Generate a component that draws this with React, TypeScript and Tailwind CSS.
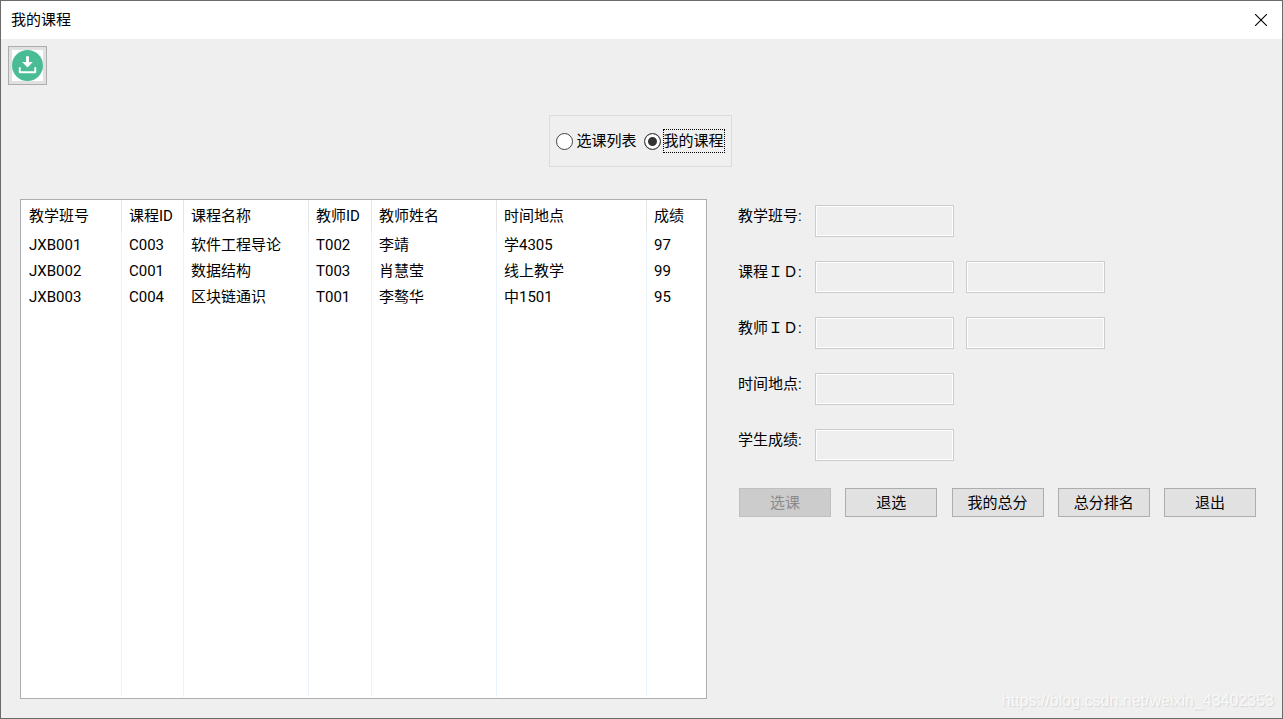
import { useState } from "react";

type Mode = "all" | "mine";

const columns = [
  { title: "教学班号", width: "w-[100px]" },
  { title: "课程ID", width: "w-[62px]" },
  { title: "课程名称", width: "w-[125px]" },
  { title: "教师ID", width: "w-[63px]" },
  { title: "教师姓名", width: "w-[125px]" },
  { title: "时间地点", width: "w-[150px]" },
  { title: "成绩", width: "" },
];

const courses = [
  ["JXB001", "C003", "软件工程导论", "T002", "李靖", "学4305", "97"],
  ["JXB002", "C001", "数据结构", "T003", "肖慧莹", "线上教学", "99"],
  ["JXB003", "C004", "区块链通识", "T001", "李骜华", "中1501", "95"],
];

const fields = [
  { id: "class-no", label: "教学班号:" },
  { id: "course-id", label: "课程ＩＤ:", extra: "课程名称" },
  { id: "teacher-id", label: "教师ＩＤ:", extra: "教师姓名" },
  { id: "place", label: "时间地点:" },
  { id: "score", label: "学生成绩:" },
];

const actions = ["选课", "退选", "我的总分", "总分排名", "退出"];

const inputClass =
  "h-8 w-[139px] border border-[#cccccc] bg-[#efefef] px-2 shadow-[inset_0_0_0_1px_#ffffff] outline-none";

function ModeOption(props: { label: string; checked: boolean; onSelect: () => void }) {
  return (
    <label className="flex items-center gap-[2px]">
      <input
        type="radio"
        name="mode"
        checked={props.checked}
        onChange={props.onSelect}
        className="size-[17px] appearance-none rounded-full border border-[#444444] bg-white outline-none checked:bg-[#333333] checked:shadow-[inset_0_0_0_3px_#ffffff]"
      />
      <span
        className={
          props.checked
            ? "border border-dotted border-black leading-[22px]"
            : "border border-transparent leading-[22px]"
        }
      >
        {props.label}
      </span>
    </label>
  );
}

function CourseTable() {
  return (
    <div className="flex flex-1 border border-[#abadb3] bg-white p-px pt-0">
      <table className="w-full table-fixed border-separate border-spacing-0 text-left">
        <thead>
          <tr className="h-8">
            {columns.map((column) => (
              <th
                key={column.title}
                className={`${column.width} border-r border-[#e5e5e5] p-0 pl-[7px] font-normal whitespace-nowrap last:border-r-0`}
              >
                {column.title}
              </th>
            ))}
          </tr>
        </thead>
        <tbody>
          {courses.map((course) => (
            <tr key={course[0]} className="h-[26px]">
              {course.map((value, i) => (
                <td
                  key={columns[i].title}
                  className="border-r border-[#eaf3fb] p-0 pl-[7px] whitespace-nowrap last:border-r-0"
                >
                  {value}
                </td>
              ))}
            </tr>
          ))}
          <tr aria-hidden="true">
            {columns.map((column) => (
              <td key={column.title} className="border-r border-[#eaf3fb] p-0 last:border-r-0" />
            ))}
          </tr>
        </tbody>
      </table>
    </div>
  );
}

export default function App() {
  const [mode, setMode] = useState<Mode>("mine");

  return (
    <div className="relative flex min-h-screen flex-col border border-[#6b6b6b] bg-[#efefef] font-[Roboto,'Noto_Sans_CJK_SC',sans-serif] text-[15px] leading-[22px] text-black">
      <header className="flex h-[38px] items-center justify-between bg-white pr-[14px] pl-[10px]">
        <h1>我的课程</h1>
        <button type="button" aria-label="关闭" className="p-px">
          <svg className="size-3" viewBox="0 0 12 12" fill="none" stroke="#000" strokeWidth="1.1">
            <path d="M0 0L12 12M12 0L0 12" />
          </svg>
        </button>
      </header>

      <main className="flex flex-1 flex-col pt-[7px] pr-[26px] pb-[19px] pl-[19px]">
        <button
          type="button"
          aria-label="导出"
          className="-ml-3 size-[39px] border border-[#adadad] bg-[#e1e1e1] p-[3px]"
        >
          <svg className="size-full bg-white" viewBox="0 0 32 32" fill="none">
            <circle cx="16" cy="16" r="16" fill="#49bb95" />
            <path d="M14.5 6.500h3V12.500h4L16 18l-5.500-5.500h4z" fill="#fff" />
            <path d="M8 18.500V23h16v-4.500" stroke="#fff" strokeWidth="2" strokeLinejoin="round" strokeLinecap="round" />
          </svg>
        </button>

        <fieldset className="mt-[30px] ml-[5px] flex gap-[6px] self-center border border-[#dcdcdc] px-[6px] py-[13px]">
          <ModeOption label="选课列表" checked={mode === "all"} onSelect={() => setMode("all")} />
          <ModeOption label="我的课程" checked={mode === "mine"} onSelect={() => setMode("mine")} />
        </fieldset>

        <div className="mt-8 flex flex-1 gap-[31px]">
          <CourseTable />

          <form className="w-[518px] pt-[6px]" onSubmit={(e) => e.preventDefault()}>
            <div className="flex flex-col gap-6">
              {fields.map((field) => (
                <div key={field.id} className="flex items-start">
                  <label htmlFor={field.id} className="w-[77px] whitespace-nowrap">
                    {field.label}
                  </label>
                  <div className="flex gap-3">
                    <input id={field.id} type="text" readOnly className={inputClass} />
                    {field.extra && (
                      <input type="text" readOnly aria-label={field.extra} className={inputClass} />
                    )}
                  </div>
                </div>
              ))}
            </div>

            <div className="mt-[27px] flex justify-between pl-px">
              {actions.map((action) => (
                <button
                  key={action}
                  type="button"
                  disabled={action === "选课"}
                  className="h-[29px] w-[92px] border border-[#adadad] bg-[#e1e1e1] disabled:border-[#bfbfbf] disabled:bg-[#cccccc] disabled:text-[#8b8b8b]"
                >
                  {action}
                </button>
              ))}
            </div>
          </form>
        </div>
      </main>

      <p className="absolute right-2 bottom-[5px] font-['Liberation_Sans',sans-serif] text-base text-[#f9f9f9] [text-shadow:1px_1px_1px_#d4d4d4]">
        https://blog.csdn.net/weixin_43402353
      </p>
    </div>
  );
}
